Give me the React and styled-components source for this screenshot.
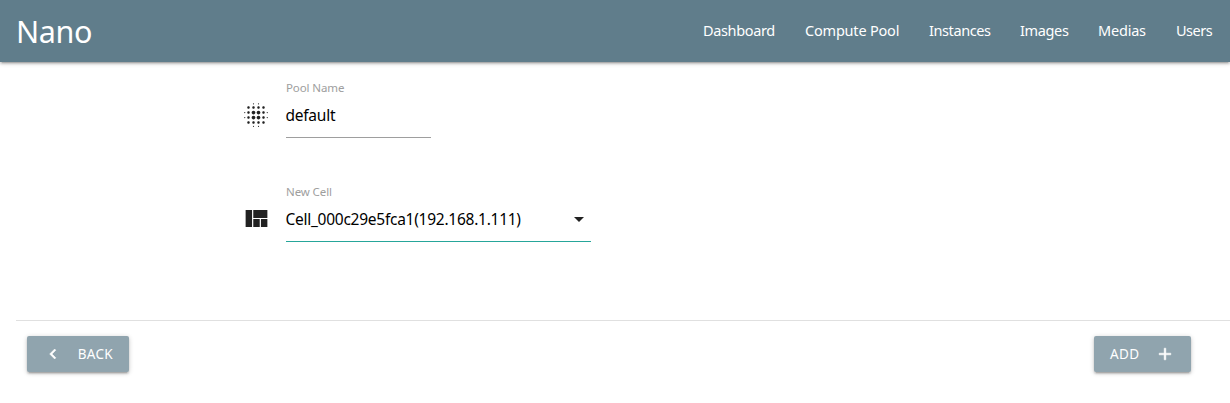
import React from 'react';
import styled, { createGlobalStyle } from 'styled-components';
import { MdBlurOn, MdViewQuilt, MdArrowDropDown, MdChevronLeft, MdAdd } from 'react-icons/md';

const GlobalStyle = createGlobalStyle`
  *, *::before, *::after { box-sizing: border-box; }
  body {
    margin: 0;
    min-height: 100vh;
    background: #fff;
    color: rgba(0, 0, 0, 0.87);
    font-family: "Segoe UI", "Noto Sans", "Open Sans", sans-serif;
    font-size: 15px;
  }
`;

const NavBar = styled.nav`
  display: flex;
  justify-content: space-between;
  height: 62px;
  padding: 0 17px 0 16px;
  line-height: 62px;
  color: #fff;
  background: #607d8b;
  box-shadow: 0 2px 2px 0 rgba(0, 0, 0, 0.14), 0 3px 1px -2px rgba(0, 0, 0, 0.12),
    0 1px 5px 0 rgba(0, 0, 0, 0.2);
`;

const Brand = styled.a`
  font-size: 30.5px;
  letter-spacing: -0.4px;
`;

const NavList = styled.ul`
  display: flex;
  gap: 30px;
  margin: 0;
  padding: 0;
  line-height: 60px;
  list-style: none;
`;

const NavItem = styled.li`
  width: ${({ $width }) => $width}px;
  font-size: 14.5px;
  letter-spacing: ${({ $tracking }) => $tracking}px;
  white-space: nowrap;
`;

const Form = styled.main`
  height: 258px;
  padding: 18px 0 0 241px;
`;

const Field = styled.div`
  display: flex;
  height: 104px;
`;

const FieldIcon = styled.div`
  width: 45px;
  padding-top: 20px;
  svg { display: block; width: 30px; height: 30px; fill: #212121; }
`;

const QuiltIcon = styled(FieldIcon)`
  padding: 20px 0 0 1px;
  svg { width: 29px; height: 29px; }
`;

const FieldBody = styled.div`
  width: ${({ $width }) => $width}px;
  height: 58px;
  border-bottom: 1px solid ${({ $line }) => $line};
`;

const Label = styled.label`
  display: block;
  height: 15px;
  line-height: 15px;
  font-size: 11.5px;
  letter-spacing: -0.1px;
  color: #9e9e9e;
`;

const Value = styled.div`
  display: flex;
  align-items: center;
  justify-content: space-between;
  height: 40px;
  font-size: 15.5px;
  line-height: 20px;
  letter-spacing: ${({ $tracking }) => $tracking}px;
  color: #000;
  span { margin: -1px 0 0 -0.5px; }
  svg { width: 24px; height: 24px; fill: #212121; }
`;

const Footer = styled.footer`
  display: flex;
  justify-content: space-between;
  margin-left: 16px;
  padding: 15px 39px 16px 11px;
  border-top: 1px solid #e0e0e0;
`;

const Button = styled.button`
  display: flex;
  align-items: center;
  justify-content: space-between;
  width: ${({ $width }) => $width}px;
  height: 36px;
  padding: 0 16px;
  border: 0;
  border-radius: 2px;
  color: #fff;
  background: #90a4ae;
  font: 13.5px "Segoe UI", "Noto Sans", sans-serif;
  letter-spacing: ${({ $tracking }) => $tracking}px;
  box-shadow: 0 2px 2px 0 rgba(0, 0, 0, 0.14), 0 3px 1px -2px rgba(0, 0, 0, 0.12),
    0 1px 5px 0 rgba(0, 0, 0, 0.2);
  svg { width: 20px; height: 20px; stroke: #fff; stroke-width: 0.6px; }
  path[fill="none"] { stroke: none; }
`;

const links = [
  { label: 'Dashboard', width: 72, tracking: -0.35 },
  { label: 'Compute Pool', width: 94, tracking: -0.2 },
  { label: 'Instances', width: 61, tracking: -0.4 },
  { label: 'Images', width: 48, tracking: -0.35 },
  { label: 'Medias', width: 48, tracking: -0.2 },
  { label: 'Users', width: 37, tracking: -0.5 },
];

export default function App() {
  return (
    <>
      <GlobalStyle />
      <NavBar>
        <Brand>Nano</Brand>
        <NavList>
          {links.map(({ label, width, tracking }) => (
            <NavItem key={label} $width={width} $tracking={tracking}>{label}</NavItem>
          ))}
        </NavList>
      </NavBar>
      <Form>
        <Field>
          <FieldIcon><MdBlurOn /></FieldIcon>
          <FieldBody $width={145} $line="#9e9e9e">
            <Label>Pool Name</Label>
            <Value $tracking={-0.25}><span>default</span></Value>
          </FieldBody>
        </Field>
        <Field>
          <QuiltIcon><MdViewQuilt /></QuiltIcon>
          <FieldBody $width={305} $line="#26a69a">
            <Label>New Cell</Label>
            <Value $tracking={-0.26}>
              <span>Cell_000c29e5fca1(192.168.1.111)</span>
              <MdArrowDropDown />
            </Value>
          </FieldBody>
        </Field>
      </Form>
      <Footer>
        <Button $width={102} $tracking={0.3}><MdChevronLeft />BACK</Button>
        <Button $width={97} $tracking={0.4}>ADD<MdAdd /></Button>
      </Footer>
    </>
  );
}
